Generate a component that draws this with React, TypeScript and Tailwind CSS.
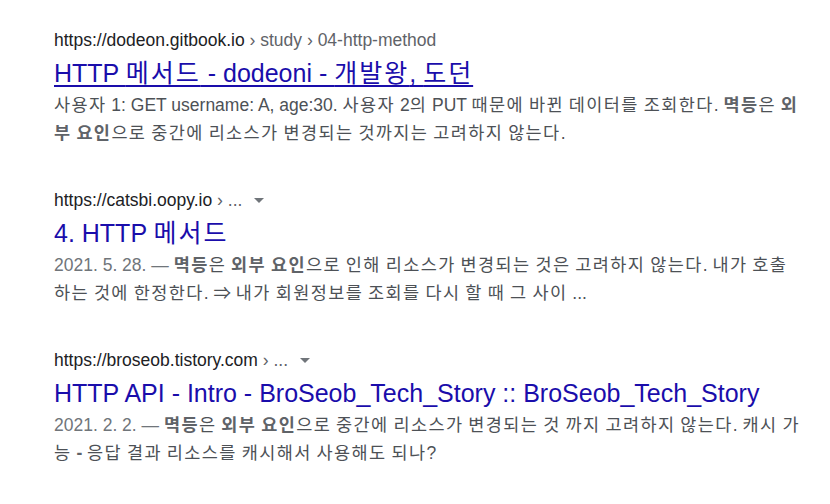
import React from "react";

const font = { fontFamily: '"Liberation Sans", Arial, "Noto Sans CJK KR", sans-serif' };

function K({ t }: { t: string }) {
  const parts = t.split(/([\u1100-\u11FF\u3131-\u318E\uAC00-\uD7A3]+)/);
  return (
    <>
      {parts.map((p, i) =>
        i % 2 === 1 ? (
          <span key={i} className="tracking-[0.08em]">
            {p}
          </span>
        ) : (
          <React.Fragment key={i}>{p}</React.Fragment>
        )
      )}
    </>
  );
}

function B({ t }: { t: string }) {
  return (
    <b className="font-bold text-[#5f6368]">
      <K t={t} />
    </b>
  );
}

function Caret() {
  return (
    <svg width="10" height="6" viewBox="0 0 10 6" className="ml-[12px] inline-block">
      <path d="M0 0h10L5 5z" fill="#70757a" />
    </svg>
  );
}

export default function App() {
  return (
    <div className="w-[830px] h-[504px] bg-white overflow-hidden" style={font}>
      <div className="pl-[54px] pt-[29px] w-[812px]">
        {/* Result 1 */}
        <div>
          <div className="h-[23px] leading-[23px] text-[17.5px] text-[#202124] whitespace-nowrap">
            https://dodeon.gitbook.io<span className="text-[#5f6368]"> › study › 04-http-method</span>
          </div>
          <div className="mt-[5px] h-[32px] leading-[32px] text-[25px] text-[#1a0dab] underline decoration-[1.5px] underline-offset-[3px] whitespace-nowrap">
            <K t="HTTP 메서드 - dodeoni - 개발왕, 도던" />
          </div>
          <div className="mt-[2px] w-[748px] text-[17.5px] leading-[28px] text-[#4d5156]">
            <K t="사용자 1: GET username: A, age:30. 사용자 2의 PUT 때문에 바뀐 데이터를 조회한다. " />
            <B t="멱등" />
            <K t="은 " />
            <B t="외부 요인" />
            <K t="으로 중간에 리소스가 변경되는 것까지는 고려하지 않는다." />
          </div>
        </div>

        {/* Result 2 */}
        <div className="mt-[42px]">
          <div className="h-[23px] leading-[23px] text-[17.5px] text-[#202124] whitespace-nowrap flex items-center">
            https://catsbi.oopy.io<span className="text-[#5f6368]">&nbsp;› ...</span>
            <Caret />
          </div>
          <div className="mt-[5px] h-[32px] leading-[32px] text-[25px] text-[#1a0dab] whitespace-nowrap">
            <K t="4. HTTP 메서드" />
          </div>
          <div className="mt-[2px] w-[748px] text-[17.5px] leading-[28px] text-[#4d5156]">
            <span className="text-[#70757a]">2021. 5. 28. — </span>
            <B t="멱등" />
            <K t="은 " />
            <B t="외부 요인" />
            <K t="으로 인해 리소스가 변경되는 것은 고려하지 않는다. 내가 호출하는 것에 한정한다. ⇒ 내가 회원정보를 조회를 다시 할 때 그 사이 ..." />
          </div>
        </div>

        {/* Result 3 */}
        <div className="mt-[42px]">
          <div className="h-[23px] leading-[23px] text-[17.5px] text-[#202124] whitespace-nowrap flex items-center">
            https://broseob.tistory.com<span className="text-[#5f6368]">&nbsp;› ...</span>
            <Caret />
          </div>
          <div className="mt-[5px] h-[32px] leading-[32px] text-[25px] text-[#1a0dab] whitespace-nowrap">
            HTTP API - Intro - BroSeob_Tech_Story :: BroSeob_Tech_Story
          </div>
          <div className="mt-[2px] w-[748px] text-[17.5px] leading-[28px] text-[#4d5156]">
            <span className="text-[#70757a]">2021. 2. 2. — </span>
            <B t="멱등" />
            <K t="은 " />
            <B t="외부 요인" />
            <K t="으로 중간에 리소스가 변경되는 것 까지 고려하지 않는다. 캐시 가능 " />
            <b className="font-bold text-[#5f6368]">-</b>
            <K t=" 응답 결과 리소스를 캐시해서 사용해도 되나?" />
          </div>
        </div>
      </div>
    </div>
  );
}
